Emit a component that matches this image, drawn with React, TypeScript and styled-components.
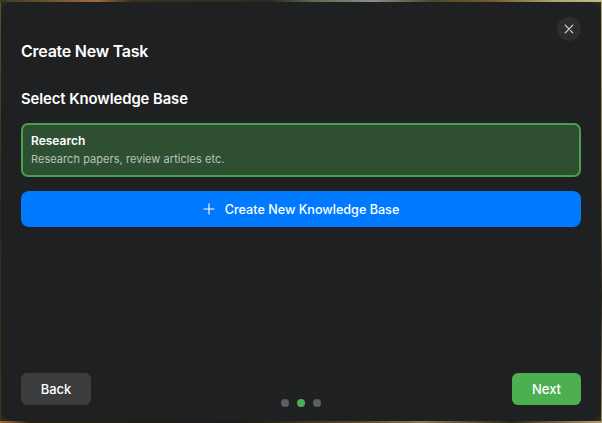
import React from "react";
import styled, { createGlobalStyle } from "styled-components";

const GlobalStyle = createGlobalStyle`
  html, body {
    margin: 0;
    padding: 0;
    width: 602px;
    height: 423px;
    overflow: hidden;
  }
  body {
    font-family: Inter, "Liberation Sans", sans-serif;
    -webkit-font-smoothing: antialiased;
  }
`;

// the blurred wallpaper only shows as a thin strip around the window
const Desktop = styled.div`
  box-sizing: border-box;
  width: 602px;
  height: 423px;
  padding: 2px 1px;
  background-color: #2a2a1c;
  background-repeat: no-repeat;
  background-image:
    linear-gradient(90deg, #3a3a22 0, #7a5a34 10%, #a06a3a 16%, #3a3020 22%, #2c2c22 45%, #5a6a50 52%, #8a8f86 62%, #4a4a26 72%, #7a5a2c 82%, #a8a868 92%, #c4bc8a 100%),
    linear-gradient(90deg, #a86a3a 0, #2a2014 5%, #1c1a12 40%, #5a4a2a 60%, #8a7a52 70%, #2c2618 85%, #b49c6c 100%),
    linear-gradient(180deg, #5a5230 0, #2c2c18 50%, #3a3a20 100%),
    linear-gradient(180deg, #b4a878 0, #8c8048 40%, #2a2418 70%, #a08c5c 100%);
  background-size: 100% 2px, 100% 2px, 1px 100%, 1px 100%;
  background-position: top left, bottom left, left top, right top;
`;

const Modal = styled.div`
  position: relative;
  box-sizing: border-box;
  width: 600px;
  height: 419px;
  padding: 38px 20px 16px;
  display: flex;
  flex-direction: column;
  background: #1f2022;
  border-radius: 12px;
  color: #fff;
`;

const CloseButton = styled.button`
  position: absolute;
  top: 15px;
  right: 20px;
  width: 24px;
  height: 24px;
  padding: 0;
  display: flex;
  align-items: center;
  justify-content: center;
  border: none;
  border-radius: 50%;
  background: #2c2d2f;
  color: #d6d6d6;
`;

const Title = styled.h1`
  margin: 0;
  font-size: 16px;
  line-height: 22px;
  font-weight: 600;
  letter-spacing: -0.25px;
`;

const Subtitle = styled.h2`
  margin: 27px 0 0;
  font-size: 14.8px;
  line-height: 20px;
  font-weight: 600;
  letter-spacing: -0.05px;
`;

const KnowledgeCard = styled.div`
  box-sizing: border-box;
  height: 54px;
  margin-top: 14px;
  padding: 8px 8px;
  display: flex;
  flex-direction: column;
  gap: 4px;
  background: #2f4f33;
  border: 2px solid #48a04c;
  border-radius: 7px;
`;

const CardName = styled.div`
  font-size: 12px;
  line-height: 15px;
  font-weight: 600;
`;

const CardDescription = styled.div`
  font-size: 11px;
  line-height: 15px;
  letter-spacing: 0.05px;
  color: #b9c2ba;
`;

const CreateButton = styled.button`
  height: 36px;
  margin-top: 14px;
  padding: 0;
  display: flex;
  align-items: center;
  justify-content: center;
  gap: 10px;
  border: none;
  border-radius: 8px;
  background: #007aff;
  color: #fff;
  font-family: inherit;
  font-size: 12.6px;
  font-weight: 500;
`;

const Footer = styled.div`
  margin-top: auto;
  display: grid;
  grid-template-columns: 1fr auto 1fr;
`;

const FooterButton = styled.button<{ $primary?: boolean }>`
  height: 32px;
  width: ${p => (p.$primary ? "69px" : "70px")};
  padding: 0;
  justify-self: ${p => (p.$primary ? "end" : "start")};
  border: none;
  border-radius: 6px;
  background: ${p => (p.$primary ? "#4caf50" : "#3b3c3e")};
  color: #fff;
  font-family: inherit;
  font-size: 13px;
  font-weight: 500;
`;

const Dots = styled.div`
  display: flex;
  gap: 8px;
  align-self: end;
  margin-bottom: -2px;
`;

const Dot = styled.span<{ $active?: boolean }>`
  width: 8px;
  height: 8px;
  border-radius: 50%;
  background: ${p => (p.$active ? "#4caf50" : "#5c5d60")};
`;

export default function App() {
  return (
    <>
      <GlobalStyle />
      <Desktop>
        <Modal>
          <CloseButton aria-label="Close">
            <svg width="10" height="10" viewBox="0 0 10 10" fill="none" stroke="currentColor" strokeWidth="1.2" strokeLinecap="round">
              <path d="M1.2 1.2 8.8 8.8M8.8 1.2 1.2 8.8" />
            </svg>
          </CloseButton>
          <Title>Create New Task</Title>
          <Subtitle>Select Knowledge Base</Subtitle>
          <KnowledgeCard>
            <CardName>Research</CardName>
            <CardDescription>Research papers, review articles etc.</CardDescription>
          </KnowledgeCard>
          <CreateButton>
            <svg width="12" height="12" viewBox="0 0 12 12" fill="none" stroke="currentColor" strokeWidth="1.1">
              <path d="M6 .5v11M.5 6h11" />
            </svg>
            Create New Knowledge Base
          </CreateButton>
          <Footer>
            <FooterButton>Back</FooterButton>
            <Dots>
              <Dot />
              <Dot $active />
              <Dot />
            </Dots>
            <FooterButton $primary>Next</FooterButton>
          </Footer>
        </Modal>
      </Desktop>
    </>
  );
}
